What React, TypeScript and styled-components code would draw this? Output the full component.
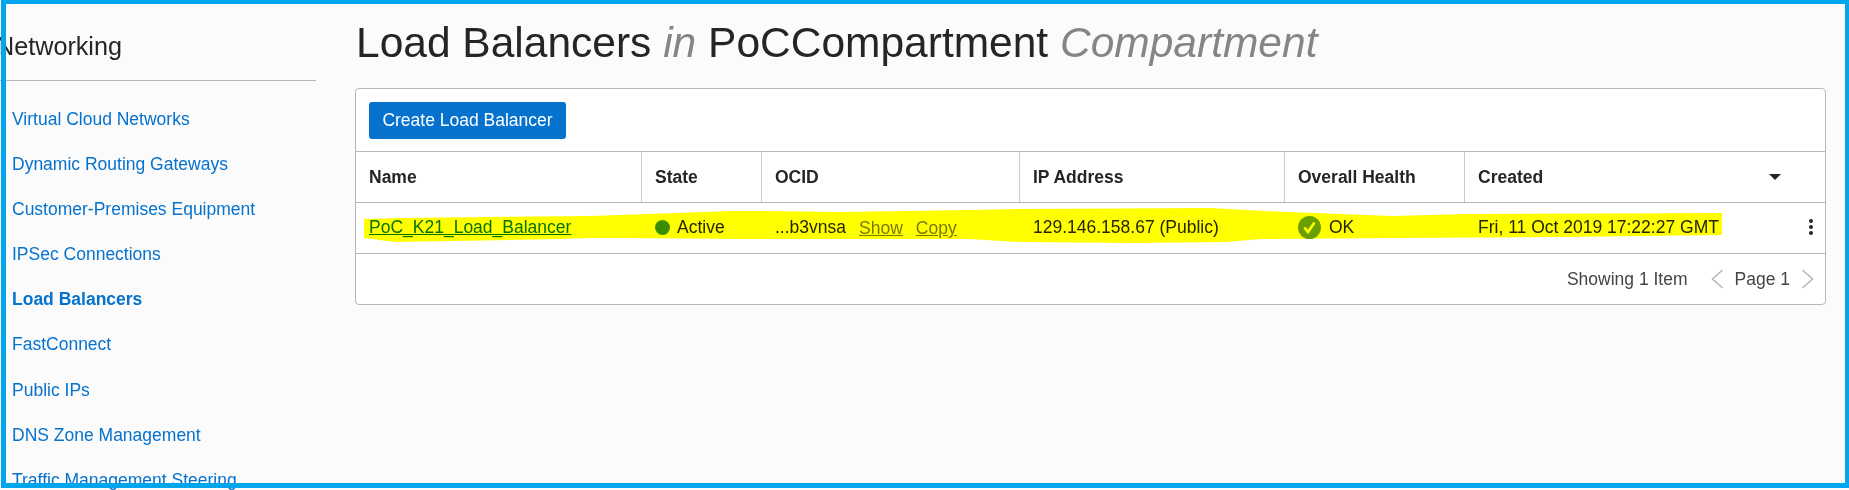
import React from "react";
import styled, { createGlobalStyle } from "styled-components";

const GlobalStyle = createGlobalStyle`
  html, body {
    margin: 0;
    padding: 0;
    height: 490px;
    overflow: hidden;
    background: #ffffff;
    font-family: "Liberation Sans", Arial, sans-serif;
  }
`;

const columns = "286px 120px 258px 265px 180px 1fr";

const Page = styled.div`
  position: relative;
  display: flex;
  width: 1849px;
  height: 490px;
  overflow: hidden;
  background: #fbfbfb;
`;

const Frame = styled.div`
  position: absolute;
  top: 0;
  left: 1px;
  right: 0;
  bottom: 2px;
  border: solid #00a6ed;
  border-width: 4px 4px 5px 5px;
  pointer-events: none;
`;

const Sidebar = styled.nav`
  flex: none;
  width: 316px;
`;

const SideTitle = styled.h2`
  margin: 0;
  height: 81px;
  padding-top: 31px;
  box-sizing: border-box;
  border-bottom: 1px solid #b4b9c0;
  font-size: 25.2px;
  line-height: 30px;
  font-weight: normal;
  text-indent: -4px;
  white-space: nowrap;
  color: #252525;
`;

const SideList = styled.div`
  display: flex;
  flex-direction: column;
  padding: 16px 0 0 12px;
`;

const SideLink = styled.a<{ $active?: boolean }>`
  height: 45.1px;
  line-height: 45.1px;
  font-size: 17.5px;
  white-space: nowrap;
  color: #0572ce;
  font-weight: ${(p) => (p.$active ? "bold" : "normal")};
`;

const Main = styled.main`
  flex: none;
  width: 1470px;
  margin-left: 39px;
`;

const Title = styled.h1`
  margin: 0;
  height: 88px;
  padding: 16px 0 0 1px;
  box-sizing: border-box;
  font-size: 42.5px;
  line-height: 54px;
  font-weight: normal;
  white-space: nowrap;
  color: #252525;

  em {
    color: #858585;
  }
`;

const Card = styled.section`
  border: 1px solid #b4b9c0;
  border-radius: 4px;
  background: #ffffff;
  height: 217px;
  box-sizing: border-box;
  width: 1471px;
`;

const Toolbar = styled.div`
  height: 63px;
  padding: 13px 0 0 13px;
  box-sizing: border-box;
  border-bottom: 1px solid #b4b9c0;
`;

const PrimaryButton = styled.button`
  display: block;
  width: 197px;
  height: 37px;
  padding: 0;
  border: none;
  border-radius: 3px;
  background: #0572ce;
  color: #ffffff;
  font-family: inherit;
  font-size: 17.5px;
`;

const HeadRow = styled.div`
  display: grid;
  grid-template-columns: ${columns};
  height: 50px;
  border-bottom: 1px solid #b4b9c0;
`;

const HeadCell = styled.div`
  position: relative;
  display: flex;
  align-items: center;
  justify-content: space-between;
  padding: 0 46px 0 13px;
  border-right: 1px solid #c9cdd2;
  font-size: 17.5px;
  font-weight: bold;
  white-space: nowrap;
  color: #252525;

  &:last-child {
    border-right: none;
  }
`;

const SortArrow = styled.span`
  width: 0;
  height: 0;
  margin-right: -2px;
  border-left: 6px solid transparent;
  border-right: 6px solid transparent;
  border-top: 6px solid #252525;
`;

const DataRow = styled.div`
  position: relative;
  display: grid;
  grid-template-columns: ${columns};
  height: 50px;
  border-bottom: 1px solid #b4b9c0;
`;

const Cell = styled.div`
  display: flex;
  align-items: center;
  padding: 0 0 2px 13px;
  font-size: 17.5px;
  white-space: nowrap;
  color: #252525;
`;

const NameLink = styled.a`
  color: #0572ce;
  text-decoration: underline;
`;

const StateDot = styled.span`
  flex: none;
  width: 15px;
  height: 15px;
  margin-right: 7px;
  border-radius: 50%;
  background: #3c8c00;
`;

const OcidAction = styled.a`
  margin-left: 13px;
  padding-top: 3px;
  color: #7a7a7a;
  text-decoration: underline;
`;

const HealthIcon = styled.svg`
  flex: none;
  margin-right: 8px;
`;

const CreatedCell = styled(Cell)`
  justify-content: space-between;
  padding-right: 12px;
`;

const Kebab = styled.svg`
  flex: none;
`;

const Highlight = styled.svg`
  position: absolute;
  top: 0;
  left: 0;
  width: 100%;
  height: 100%;
  mix-blend-mode: multiply;
  pointer-events: none;
`;

const Pager = styled.div`
  display: flex;
  align-items: center;
  justify-content: flex-end;
  height: 50px;
  padding-right: 11px;
  font-size: 17.5px;
  color: #444444;
`;

const PagerCount = styled.span`
  margin-right: 23px;
`;

const PageLabel = styled.span`
  margin: 0 11px;
`;

const Chevron = ({ flip }: { flip?: boolean }) => (
    <svg width="13" height="20" viewBox="0 0 13 20" fill="none" stroke="#b4b9c0" strokeWidth="1.6">
        <path d={flip ? "M1.5 1 L11.5 10 L1.5 19" : "M11.5 1 L1.5 10 L11.5 19"} />
    </svg>
);

const navItems = [
    "Virtual Cloud Networks",
    "Dynamic Routing Gateways",
    "Customer-Premises Equipment",
    "IPSec Connections",
    "Load Balancers",
    "FastConnect",
    "Public IPs",
    "DNS Zone Management",
    "Traffic Management Steering",
];

const headers = ["Name", "State", "OCID", "IP Address", "Overall Health"];

const App = () => {
    return (
        <>
            <GlobalStyle />
            <Page>
                <Sidebar>
                    <SideTitle>Networking</SideTitle>
                    <SideList>
                        {navItems.map((item) => (
                            <SideLink key={item} $active={item === "Load Balancers"}>{item}</SideLink>
                        ))}
                    </SideList>
                </Sidebar>
                <Main>
                    <Title>Load Balancers <em>in</em> PoCCompartment <em>Compartment</em></Title>
                    <Card>
                        <Toolbar>
                            <PrimaryButton>Create Load Balancer</PrimaryButton>
                        </Toolbar>
                        <HeadRow>
                            {headers.map((h) => <HeadCell key={h}>{h}</HeadCell>)}
                            <HeadCell>Created<SortArrow /></HeadCell>
                        </HeadRow>
                        <DataRow>
                            <Cell><NameLink>PoC_K21_Load_Balancer</NameLink></Cell>
                            <Cell><StateDot />Active</Cell>
                            <Cell>...b3vnsa<OcidAction>Show</OcidAction><OcidAction>Copy</OcidAction></Cell>
                            <Cell>129.146.158.67 (Public)</Cell>
                            <Cell>
                                <HealthIcon width="23" height="23" viewBox="0 0 23 23">
                                    <circle cx="11.5" cy="11.5" r="11.5" fill="#6a9f00" />
                                    <path d="M6.5 11.5 L10 16 L16.5 6.5" fill="none" stroke="#ffffff" strokeWidth="2.6" />
                                </HealthIcon>
                                OK
                            </Cell>
                            <CreatedCell>
                                Fri, 11 Oct 2019 17:22:27 GMT
                                <Kebab width="4" height="16" viewBox="0 0 4 16" fill="#252525">
                                    <circle cx="2" cy="2" r="2" />
                                    <circle cx="2" cy="8" r="2" />
                                    <circle cx="2" cy="14" r="2" />
                                </Kebab>
                            </CreatedCell>
                            <Highlight viewBox="356 203 1469 50" preserveAspectRatio="none">
                                <path
                                    fill="#ffff00"
                                    d="M364 219 L400 218 L590 216 L620 215 L730 211 L760 211 L840 212 L970 210 L1020 209 L1210 208 L1265 211 L1393 216 L1465 214 L1722 213 L1722 235 L1565 237 L1393 238 L1262 239 L1225 242 L1136 243 L1020 242 L970 239 L850 239 L740 239 L620 238 L589 238 L560 239 L395 242 L372 239 L364 238 Z"
                                />
                            </Highlight>
                        </DataRow>
                        <Pager>
                            <PagerCount>Showing 1 Item</PagerCount>
                            <Chevron />
                            <PageLabel>Page 1</PageLabel>
                            <Chevron flip />
                        </Pager>
                    </Card>
                </Main>
                <Frame />
            </Page>
        </>
    );
};

export default App;
